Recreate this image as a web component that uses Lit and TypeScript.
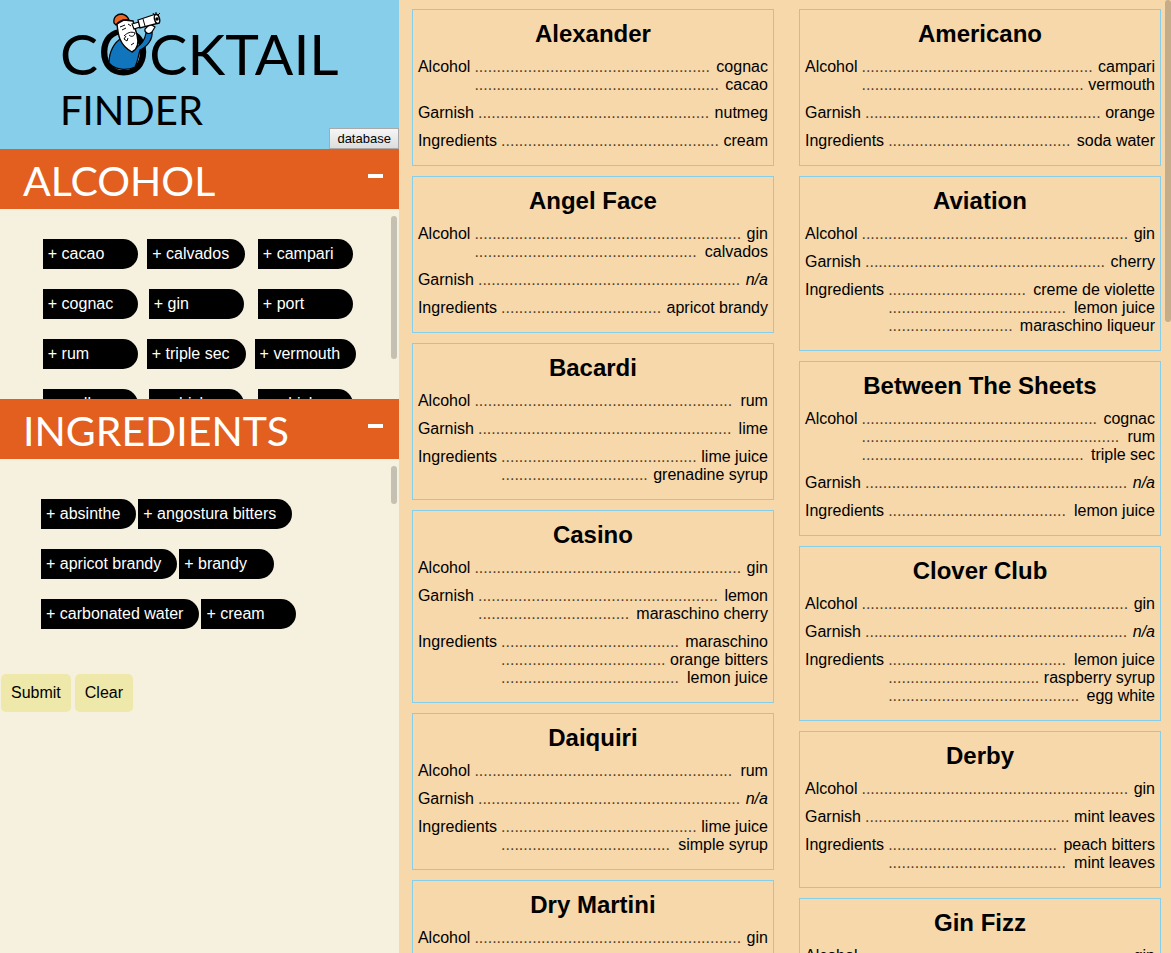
import { LitElement, html, css, svg } from "lit";
import { customElement, property } from "lit/decorators.js";

type Recipe = {
  name: string;
  alcohol: string[];
  garnish: string[];
  ingredients: string[];
};

const ALCOHOLS = [
  "cacao", "calvados", "campari",
  "cognac", "gin", "port",
  "rum", "triple sec", "vermouth",
  "vodka", "whiskey", "whisky",
];

const INGREDIENTS = [
  "absinthe", "angostura bitters", "apricot brandy",
  "brandy", "carbonated water", "cream",
];

const COLUMNS: Recipe[][] = [
  [
    { name: "Alexander", alcohol: ["cognac", "cacao"], garnish: ["nutmeg"], ingredients: ["cream"] },
    { name: "Angel Face", alcohol: ["gin", "calvados"], garnish: [], ingredients: ["apricot brandy"] },
    { name: "Bacardi", alcohol: ["rum"], garnish: ["lime"], ingredients: ["lime juice", "grenadine syrup"] },
    { name: "Casino", alcohol: ["gin"], garnish: ["lemon", "maraschino cherry"], ingredients: ["maraschino", "orange bitters", "lemon juice"] },
    { name: "Daiquiri", alcohol: ["rum"], garnish: [], ingredients: ["lime juice", "simple syrup"] },
    { name: "Dry Martini", alcohol: ["gin"], garnish: [], ingredients: [] },
  ],
  [
    { name: "Americano", alcohol: ["campari", "vermouth"], garnish: ["orange"], ingredients: ["soda water"] },
    { name: "Aviation", alcohol: ["gin"], garnish: ["cherry"], ingredients: ["creme de violette", "lemon juice", "maraschino liqueur"] },
    { name: "Between The Sheets", alcohol: ["cognac", "rum", "triple sec"], garnish: [], ingredients: ["lemon juice"] },
    { name: "Clover Club", alcohol: ["gin"], garnish: [], ingredients: ["lemon juice", "raspberry syrup", "egg white"] },
    { name: "Derby", alcohol: ["gin"], garnish: ["mint leaves"], ingredients: ["peach bitters", "mint leaves"] },
    { name: "Gin Fizz", alcohol: ["gin"], garnish: [], ingredients: [] },
  ],
];

const sailor = svg`
  <path d="M9 56C9 45 14 35 22 31L32 44 37 40C42 37 45 32 46 26L52 24C53 32 48 39 40 43C38 50 38 54 35 60C27 64 15 63 9 56Z" fill="#1175bd" stroke="#000" stroke-width="1.200"/>
  <path d="M45 22C44 26 49 28 52 25L55 20 50 17Z" fill="#fff" stroke="#000" stroke-width="1.200"/>
  <path d="M17 17C18 27 19 38 32 45C38 42 39 36 37 28L33 14 24 13Z" fill="#fff" stroke="#000" stroke-width="1.400"/>
  <path d="M32 17L39 15 40 20 34 22Z" fill="#fff" stroke="#000" stroke-width="1.200"/>
  <path d="M38 13L56 7 59 16 40 21Z" fill="#fff" stroke="#000" stroke-width="1.300"/>
  <path d="M43 12L45 19" stroke="#000" stroke-width="1"/>
  <ellipse cx="57" cy="12" rx="2.500" ry="4.500" transform="rotate(-16 57 12)" fill="#fff" stroke="#000" stroke-width="1.400"/>
  <circle cx="57" cy="12" r="1.800"/>
  <path d="M54 8L53 6M56 7L56 5M58 8L60 6" stroke="#000" stroke-width="1"/>
  <path d="M14 16C13 10 17 7 22 7C26 8 28 10 29 13C23 12 19 14 16 18Z" fill="#ec6422" stroke="#000" stroke-width="1.300"/>
  <path d="M20 20L25 18M22 23L26 21M28 17L31 19M24 29C27 26 31 24 35 26C34 30 31 30 29 28M26 29L24 32 27 34 28 31M31 38L34 36" fill="none" stroke="#000" stroke-width="1"/>
`;

@customElement("filter-panel")
class FilterPanel extends LitElement {
  @property() label = "";
  @property({ type: Array }) items: string[] = [];
  @property() layout = "grid";

  static styles = css`
    :host {
      display: block;
    }
    .bar {
      display: flex;
      justify-content: space-between;
      height: 60px;
      padding: 0 15px 0 23px;
      background: #e25f1f;
      color: #fff;
    }
    .title {
      margin: 0;
      font: 400 41px/64px Lato, sans-serif;
    }
    .toggle {
      align-self: flex-start;
      margin: 25px 0 0;
      padding: 0;
      width: 17px;
      height: 4px;
      border: 1px solid #e25f1f;
      border-width: 0 1px;
      background: #fff;
    }
    .body {
      position: relative;
      height: 190px;
      box-sizing: border-box;
      overflow: hidden;
    }
    .grid {
      display: grid;
      grid-template-columns: repeat(3, auto);
      justify-content: center;
      justify-items: center;
      align-content: start;
      gap: 20px 9px;
      padding: 30px 0 0;
    }
    .flow {
      display: flex;
      flex-wrap: wrap;
      align-content: flex-start;
      gap: 20px 2px;
      padding: 40px 98px 0 41px;
    }
    .chip {
      height: 30px;
      min-width: 95px;
      padding: 0 16px 0 5px;
      border: 0;
      border-radius: 0 15px 15px 0;
      background: #000;
      color: #fff;
      font: 16px/30px "Liberation Sans", Arial, sans-serif;
      text-align: left;
      white-space: nowrap;
    }
    .thumb {
      position: absolute;
      top: 7px;
      right: 2px;
      width: 6px;
      border-radius: 3px;
      background: #c4c1b2;
    }
    .grid .thumb {
      height: 143px;
    }
    .flow .thumb {
      height: 38px;
    }
  `;

  render() {
    return html`
      <div class="bar">
        <h2 class="title">${this.label}</h2>
        <button class="toggle" aria-label="Collapse ${this.label}"></button>
      </div>
      <div class="body ${this.layout}">
        ${this.items.map((item) => html`<button class="chip">+ ${item}</button>`)}
        <div class="thumb"></div>
      </div>
    `;
  }
}

@customElement("recipe-card")
class RecipeCard extends LitElement {
  @property({ attribute: false }) recipe!: Recipe;

  static styles = css`
    :host {
      display: block;
      padding: 10px 5px 15px;
      border: 1px solid #87ceeb;
    }
    .name {
      margin: 0 0 10px;
      font-size: 24px;
      line-height: 28px;
      text-align: center;
    }
    .facts {
      display: flex;
      flex-direction: column;
      gap: 10px;
      margin: 0;
    }
    .fact {
      display: flex;
      gap: 4px;
      min-width: 0;
    }
    .values {
      flex: 1;
      min-width: 0;
      margin: 0;
    }
    .line {
      display: flex;
      gap: 4px;
      white-space: nowrap;
    }
    .line::before {
      content: "....................................................................................................";
      flex: 1;
      min-width: 0;
      height: 18px;
      overflow: hidden;
      color: #54432d;
      font-style: normal;
      white-space: normal;
      line-break: anywhere;
    }
    .none {
      font-style: italic;
    }
  `;

  private fact(label: string, values: string[]) {
    const lines = values.length
      ? values.map((value) => html`<div class="line">${value}</div>`)
      : html`<div class="line none">n/a</div>`;
    return html`
      <div class="fact">
        <dt>${label}</dt>
        <dd class="values">${lines}</dd>
      </div>
    `;
  }

  render() {
    const { name, alcohol, garnish, ingredients } = this.recipe;
    return html`
      <h3 class="name">${name}</h3>
      <dl class="facts">
        ${this.fact("Alcohol", alcohol)}
        ${this.fact("Garnish", garnish)}
        ${this.fact("Ingredients", ingredients)}
      </dl>
    `;
  }
}

@customElement("app-root")
class AppRoot extends LitElement {
  static styles = css`
    :host {
      display: grid;
      grid-template-columns: 31fr 60fr;
      height: 100vh;
      overflow: hidden;
      color: #000;
      font: 16px/18px "Liberation Sans", Arial, sans-serif;
    }
    .side {
      min-width: 0;
      background: #f5f1de;
    }
    .masthead {
      display: flex;
      align-items: flex-end;
      height: 149px;
      background: #87ceeb;
    }
    .logo {
      align-self: flex-start;
      flex: 1;
      min-width: 0;
      margin: 0;
      padding: 23px 0 0 60px;
      font-family: Lato, sans-serif;
      font-weight: 400;
    }
    .word {
      display: block;
      font-size: 57px;
      line-height: 60px;
      white-space: nowrap;
    }
    .small {
      font-size: 40px;
      line-height: 54px;
    }
    .mark {
      position: relative;
      font-size: 64px;
      line-height: 0;
    }
    .sailor {
      position: absolute;
      left: 2px;
      bottom: 10px;
      width: 64px;
      height: 72px;
    }
    .database {
      flex: none;
      height: 21px;
      padding: 0 7px;
      border: 1px solid #a9a9a9;
      background: linear-gradient(#f6f6f6, #dddddd);
      color: #000;
      font: 13px/18px "Liberation Sans", Arial, sans-serif;
    }
    .actions {
      display: flex;
      gap: 4px;
      padding: 25px 1px 0;
    }
    .action {
      height: 38px;
      padding: 0 10px;
      border: 0;
      border-radius: 5px;
      background: #eee8aa;
      color: #000;
      font: 16px/38px "Liberation Sans", Arial, sans-serif;
    }
    .results {
      position: relative;
      display: grid;
      grid-template-columns: minmax(0, 1fr) minmax(0, 1fr);
      gap: 25px;
      min-width: 0;
      padding: 9px 10px 0 13px;
      background: #f6d8ab;
      overflow: hidden;
    }
    .column {
      display: flex;
      flex-direction: column;
      gap: 10px;
      min-width: 0;
    }
    .thumb {
      position: absolute;
      top: 0;
      right: 0;
      width: 6px;
      height: 322px;
      border-radius: 3px;
      background: #c5ad89;
    }
  `;

  render() {
    return html`
      <aside class="side">
        <header class="masthead">
          <h1 class="logo">
            <span class="word">C<span class="mark">O<svg class="sailor" viewBox="0 0 64 72" aria-hidden="true">${sailor}</svg></span>CKTAIL</span>
            <span class="word small">FINDER</span>
          </h1>
          <button class="database">database</button>
        </header>
        <filter-panel label="ALCOHOL" layout="grid" .items=${ALCOHOLS}></filter-panel>
        <filter-panel label="INGREDIENTS" layout="flow" .items=${INGREDIENTS}></filter-panel>
        <div class="actions">
          <button class="action">Submit</button>
          <button class="action">Clear</button>
        </div>
      </aside>
      <main class="results">
        ${COLUMNS.map((column) => html`
          <div class="column">
            ${column.map((recipe) => html`<recipe-card .recipe=${recipe}></recipe-card>`)}
          </div>
        `)}
        <div class="thumb"></div>
      </main>
    `;
  }
}
